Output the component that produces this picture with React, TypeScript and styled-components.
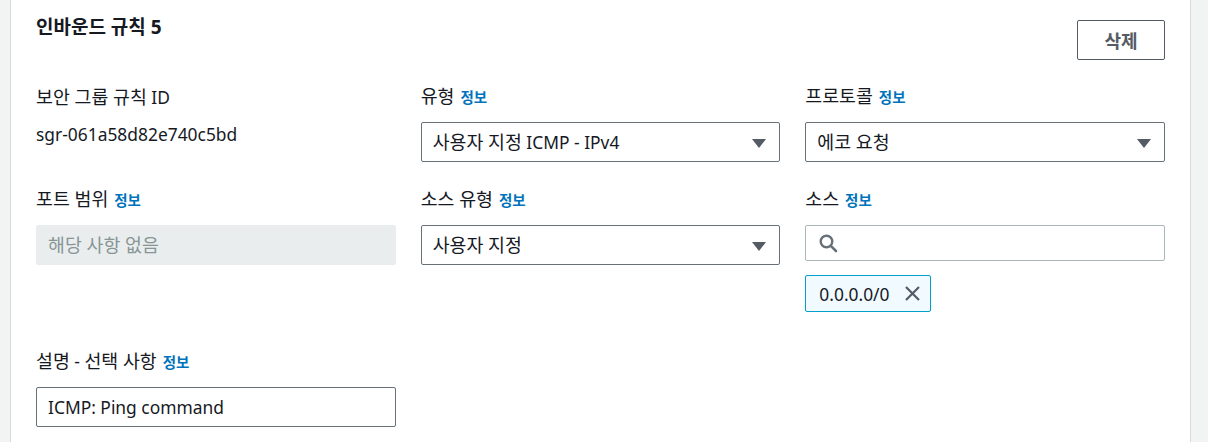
import React from "react";
import styled, { createGlobalStyle } from "styled-components";

const Global = createGlobalStyle`
  html, body { margin: 0; padding: 0; background: #f2f3f3; }
  body {
    font-family: "Noto Sans", "Noto Sans CJK KR", sans-serif;
    color: #16191f;
    -webkit-font-smoothing: antialiased;
  }
  * { box-sizing: border-box; }
`;

const Page = styled.div`
  display: flex;
  height: 442px;
  padding-left: 10px;
  padding-right: 17px;
`;

const Panel = styled.section`
  flex: 1;
  background: #ffffff;
  border-left: 1px solid #d5dbdb;
  border-right: 1px solid #d5dbdb;
  padding: 17px 25px 0 25px;
`;

const Header = styled.div`
  display: flex;
  justify-content: space-between;
  align-items: flex-start;
`;

const Title = styled.h2`
  margin: 0;
  font-size: 19px;
  line-height: 20px;
  font-weight: 700;
  color: #16191f;
`;

const DeleteButton = styled.button`
  margin-top: 3px;
  width: 88px;
  height: 40px;
  background: #ffffff;
  border: 1px solid #545b64;
  border-radius: 2px;
  color: #545b64;
  font-family: inherit;
  font-size: 18px;
  font-weight: 700;
  padding: 0;
  cursor: pointer;
`;

const Grid = styled.div`
  display: grid;
  grid-template-columns: repeat(3, 1fr);
  column-gap: 25px;
  row-gap: 27px;
  margin-top: 26px;
`;

const Field = styled.div`
  display: flex;
  flex-direction: column;
  gap: 14px;
`;

const Label = styled.div`
  font-size: 17.4px;
  line-height: 22px;
  color: #16191f;
  display: flex;
  align-items: baseline;
  gap: 6px;
`;

/* Hangul runs render slightly larger than the Latin text next to them */
const Ko = styled.span`
  font-size: 1.055em;
  line-height: 1;
`;

const Info = styled.a`
  font-size: 14.5px;
  font-weight: 700;
  color: #0073bb;
  text-decoration: none;
`;

const Value = styled.div`
  font-size: 17.4px;
  line-height: 22px;
  color: #16191f;
  padding-top: 1px;
`;

const SelectBox = styled.div`
  height: 40px;
  border: 1px solid #687078;
  border-radius: 2px;
  display: flex;
  align-items: center;
  justify-content: space-between;
  padding: 0 13px 0 11px;
  font-size: 17.4px;
  color: #16191f;
  background: #ffffff;
`;

const Caret = styled.span`
  width: 0;
  height: 0;
  border-left: 7px solid transparent;
  border-right: 7px solid transparent;
  border-top: 9px solid #545b64;
  margin-top: 2px;
`;

const TextBox = styled.div<{ $disabled?: boolean }>`
  height: 40px;
  border: 1px solid ${(p) => (p.$disabled ? "#eaeded" : "#687078")};
  background: ${(p) => (p.$disabled ? "#eaeded" : "#ffffff")};
  color: ${(p) => (p.$disabled ? "#879596" : "#16191f")};
  border-radius: 2px;
  display: flex;
  align-items: center;
  padding: 0 11px;
  font-size: 17.4px;
`;

const SearchBox = styled.div`
  height: 36px;
  border: 1px solid #aab7b8;
  border-radius: 2px;
  display: flex;
  align-items: center;
  padding: 0 13px;
  background: #ffffff;
`;

const SourceStack = styled.div`
  display: flex;
  flex-direction: column;
  gap: 14px;
  padding-bottom: 11px;
`;

const Token = styled.div`
  align-self: flex-start;
  height: 37px;
  display: flex;
  align-items: center;
  gap: 14px;
  padding: 0 9px 0 13px;
  background: #f1faff;
  border: 1px solid #00a1c9;
  border-radius: 2px;
  font-size: 17.4px;
  color: #16191f;
`;

const IconBtn = styled.span`
  display: flex;
  align-items: center;
`;

const SearchIcon = () => (
  <svg width="19" height="19" viewBox="0 0 19 19" fill="none">
    <circle cx="7.5" cy="7.5" r="5.8" stroke="#687078" strokeWidth="2.4" />
    <path d="M11.8 11.8 L17 17" stroke="#687078" strokeWidth="2.6" strokeLinecap="round" />
  </svg>
);

const CloseIcon = () => (
  <svg width="17" height="17" viewBox="0 0 17 17" fill="none">
    <path d="M2 2 L15 15 M15 2 L2 15" stroke="#545b64" strokeWidth="2.2" strokeLinecap="butt" />
  </svg>
);

export default function App() {
  return (
    <>
      <Global />
      <Page>
        <Panel>
          <Header>
            <Title>인바운드 규칙 5</Title>
            <DeleteButton>삭제</DeleteButton>
          </Header>
          <Grid>
            <Field>
              <Label>
                <span>
                  <Ko>보안 그룹 규칙</Ko> ID
                </span>
              </Label>
              <Value>sgr-061a58d82e740c5bd</Value>
            </Field>
            <Field>
              <Label>
                <Ko>유형</Ko>
                <Info>정보</Info>
              </Label>
              <SelectBox>
                <span>
                  <Ko>사용자 지정</Ko> ICMP - IPv4
                </span>
                <Caret />
              </SelectBox>
            </Field>
            <Field>
              <Label>
                <Ko>프로토콜</Ko>
                <Info>정보</Info>
              </Label>
              <SelectBox>
                <Ko>에코 요청</Ko>
                <Caret />
              </SelectBox>
            </Field>

            <Field>
              <Label>
                <Ko>포트 범위</Ko>
                <Info>정보</Info>
              </Label>
              <TextBox $disabled>
                <Ko>해당 사항 없음</Ko>
              </TextBox>
            </Field>
            <Field>
              <Label>
                <Ko>소스 유형</Ko>
                <Info>정보</Info>
              </Label>
              <SelectBox>
                <Ko>사용자 지정</Ko>
                <Caret />
              </SelectBox>
            </Field>
            <Field>
              <Label>
                <Ko>소스</Ko>
                <Info>정보</Info>
              </Label>
              <SourceStack>
                <SearchBox>
                  <SearchIcon />
                </SearchBox>
                <Token>
                  <span>0.0.0.0/0</span>
                  <IconBtn>
                    <CloseIcon />
                  </IconBtn>
                </Token>
              </SourceStack>
            </Field>

            <Field>
              <Label>
                <span>
                  <Ko>설명</Ko> - <Ko>선택 사항</Ko>
                </span>
                <Info>정보</Info>
              </Label>
              <TextBox>ICMP: Ping command</TextBox>
            </Field>
          </Grid>
        </Panel>
      </Page>
    </>
  );
}
